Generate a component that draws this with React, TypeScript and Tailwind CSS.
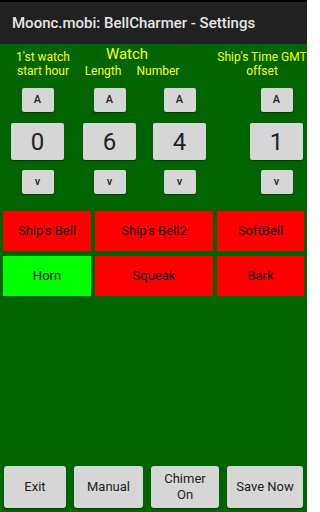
import React from 'react';

const font = { fontFamily: 'Roboto, "Liberation Sans", sans-serif' };

function SmallBtn({ label }: { label: string }) {
  return (
    <div className="w-[32px] h-[24px] bg-[#d6d6d6] rounded-[2px] shadow-[0_1px_1px_rgba(0,0,0,0.4)] flex items-center justify-center text-[11px] font-medium text-[#222]">
      {label}
    </div>
  );
}

function Column({ value, ml }: { value: string; ml: string }) {
  return (
    <div className={`w-[53px] flex flex-col items-center ${ml}`}>
      <SmallBtn label="A" />
      <div className="mt-[11px] w-[53px] h-[37px] bg-[#d6d6d6] rounded-[2px] shadow-[0_1px_1px_rgba(0,0,0,0.4)] flex items-center justify-center text-[24px] text-[#222]">
        {value}
      </div>
      <div className="mt-[10px]">
        <SmallBtn label="v" />
      </div>
    </div>
  );
}

export default function App() {
  const sounds = [
    { name: "Ship's Bell", on: false },
    { name: "Ship's Bell2", on: false },
    { name: 'SoftBell', on: false },
    { name: 'Horn', on: true },
    { name: 'Squeak', on: false },
    { name: 'Bark', on: false },
  ];

  return (
    <div className="w-[307px] h-[512px] bg-[#006400] flex flex-col overflow-hidden" style={font}>
      <div className="h-[44px] bg-[#212121] border-t-2 border-black flex items-center pl-[12px] text-[15px] font-medium text-[#e6e6e6]">
        Moonc.mobi: BellCharmer - Settings
      </div>

      {/* labels */}
      <div className="relative h-[36px] text-[12px] text-[#ffff00] leading-[14px]">
        <div className="absolute left-[10px] top-[6px] w-[66px] text-center">1'st watch<br />start hour</div>
        <div className="absolute left-[100px] top-[2px] w-[54px] text-center text-[15px] leading-[17px]">Watch</div>
        <div className="absolute left-[83px] top-[20px] w-[40px] text-center">Length</div>
        <div className="absolute left-[134px] top-[20px] w-[48px] text-center">Number</div>
        <div className="absolute left-[216px] top-[6px] w-[92px] text-center">Ship's Time GMT<br />offset</div>
      </div>

      <div className="flex pl-[11px] mt-[8px]">
        <Column value="0" ml="" />
        <Column value="6" ml="ml-[19px]" />
        <Column value="4" ml="ml-[17px]" />
        <Column value="1" ml="ml-[44px]" />
      </div>

      <div className="mt-[17px] px-[3px] grid grid-cols-[88px_118px_87px] gap-x-[4px] gap-y-[5px]">
        {sounds.map(s => (
          <div
            key={s.name}
            className={`h-[40px] flex items-center justify-center text-[13px] text-[#111] ${s.on ? 'bg-[#00ff00]' : 'bg-[#ff0000]'}`}
          >
            {s.name}
          </div>
        ))}
      </div>

      <div className="mt-auto mb-[4px] flex px-[4px] gap-[8px]">
        {['Exit', 'Manual', 'Chimer On', 'Save Now'].map((b, i) => (
          <div
            key={b}
            className={`h-[42px] bg-[#d6d6d6] rounded-[3px] shadow-[0_1px_1px_rgba(0,0,0,0.4)] flex items-center justify-center text-center text-[13px] leading-[16px] text-[#222] ${
              i === 0 ? 'w-[62px]' : i === 1 ? 'w-[69px]' : i === 2 ? 'w-[68px] px-[10px]' : 'w-[76px]'
            }`}
          >
            {b}
          </div>
        ))}
      </div>
    </div>
  );
}
